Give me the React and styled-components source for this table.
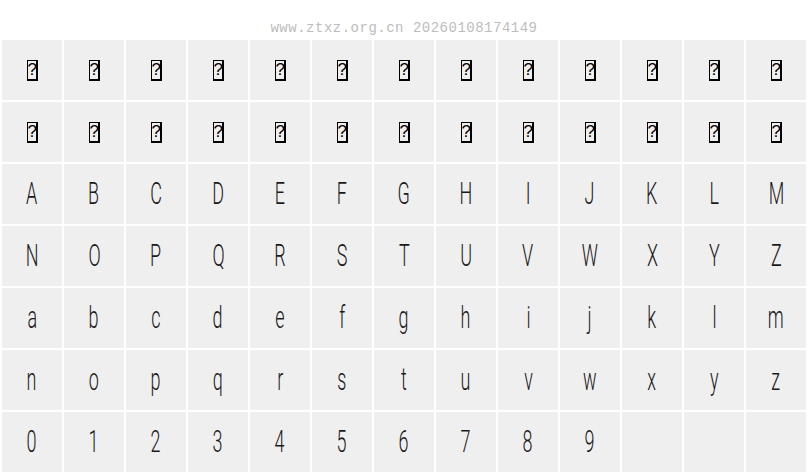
import styled, { createGlobalStyle } from "styled-components";

const GlobalStyle = createGlobalStyle`
  html, body {
    margin: 0;
    padding: 0;
    background: #ffffff;
  }
`;

const Page = styled.div`
  width: 808px;
  height: 476px;
  overflow: hidden;
`;

const Header = styled.div`
  height: 40px;
  box-sizing: border-box;
  padding-top: 21px;
  display: flex;
  justify-content: center;
  font-family: "Liberation Mono", monospace;
  font-size: 14px;
  line-height: 15px;
  letter-spacing: 0.5px;
  color: #bdbdbd;
`;

const Grid = styled.div`
  display: grid;
  grid-template-columns: repeat(13, 60px);
  grid-auto-rows: 60px;
  gap: 2px;
  padding-left: 2px;
`;

const Cell = styled.div`
  background: #efefef;
  display: flex;
  align-items: center;
  justify-content: center;
`;

const Glyph = styled.span`
  display: inline-block;
  font-family: Roboto, "Liberation Sans", sans-serif;
  font-weight: 300;
  font-size: 31px;
  line-height: 38px;
  color: #1a1a1a;
  transform: scaleX(0.58);
`;

const Missing = styled.span`
  display: inline-block;
  box-sizing: border-box;
  width: 11px;
  height: 21px;
  margin-top: 1px;
  border: 1.5px solid #000;
  border-right-width: 2px;
  border-bottom-width: 2px;
  font-family: "Liberation Sans", sans-serif;
  font-size: 17px;
  line-height: 18px;
  text-align: center;
  color: #000;
`;

const rows = [
  null,
  null,
  "ABCDEFGHIJKLM",
  "NOPQRSTUVWXYZ",
  "abcdefghijklm",
  "nopqrstuvwxyz",
  "0123456789",
];

const App = () => {
  const cells = [];
  rows.forEach((row, r) => {
    for (let c = 0; c < 13; c++) {
      let content = null;
      if (row === null) content = <Missing>?</Missing>;
      else if (row[c]) content = <Glyph>{row[c]}</Glyph>;
      cells.push(<Cell key={r + "-" + c}>{content}</Cell>);
    }
  });
  return (
    <Page>
      <GlobalStyle />
      <Header>www.ztxz.org.cn 20260108174149</Header>
      <Grid>{cells}</Grid>
    </Page>
  );
};

export default App;
